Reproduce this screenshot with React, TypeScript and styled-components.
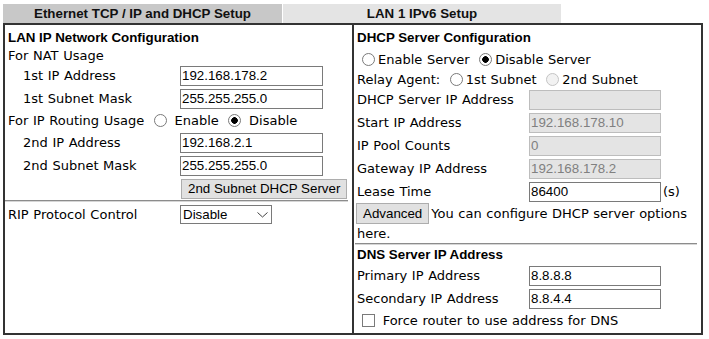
import React from 'react';
import styled, { createGlobalStyle } from 'styled-components';

const Global = createGlobalStyle`
  html, body { margin: 0; padding: 0; background: #fff; }
  body {
    font-family: "DejaVu Sans", Verdana, sans-serif;
    font-size: 13px;
    word-spacing: 0.5px;
    color: #000;
  }
  * { box-sizing: border-box; }
`;

const Page = styled.div`
  padding: 4px 0 0 3px;
  width: 703px;
`;

const TabBar = styled.div`
  display: flex;
  gap: 1px;
  height: 19px;
`;

const Tab = styled.div<{ $active?: boolean }>`
  width: ${(p) => (p.$active ? 279 : 278)}px;
  background: ${(p) => (p.$active ? '#c8c8c8' : '#e4e4e4')};
  font: bold 13.33px "Liberation Sans", Arial, sans-serif;
  word-spacing: 0;
  color: #111;
  display: flex;
  align-items: center;
  justify-content: center;
`;

const Panel = styled.div`
  width: 700px;
  height: 312px;
  border: 2px solid #333;
  display: grid;
  grid-template-columns: 347px 349px;
`;

const Column = styled.div<{ $divider?: boolean }>`
  display: flex;
  flex-direction: column;
  padding-top: 2px;
  border-left: ${(p) => (p.$divider ? '2px solid #333' : 'none')};
`;

const Row = styled.div<{ $h: number }>`
  display: flex;
  align-items: center;
  height: ${(p) => p.$h}px;
  padding-left: 3px;
  white-space: nowrap;
`;

const Heading = styled.div<{ $h: number }>`
  display: flex;
  align-items: center;
  height: ${(p) => p.$h}px;
  padding-left: 3px;
  font: bold 13.33px "Liberation Sans", Arial, sans-serif;
  word-spacing: 0;
`;

const Label = styled.span<{ $indent?: boolean }>`
  flex: none;
  width: 172px;
  padding-left: ${(p) => (p.$indent ? 15 : 0)}px;
`;

const TextInput = styled.input<{ $w: number }>`
  width: ${(p) => p.$w}px;
  height: 20px;
  margin: 0;
  padding: 0 2px 0 1px;
  border: 1px solid #7a7a7a;
  background: #fff;
  color: #000;
  font: 13.33px "Liberation Sans", Arial, sans-serif;
  word-spacing: 0;
  outline: none;
  &:disabled {
    background: #e4e4e4;
    border-color: #bdbdbd;
    color: #808080;
  }
`;

const Button = styled.button<{ $h: number }>`
  flex: none;
  height: ${(p) => p.$h}px;
  margin: 0;
  padding: 0 6px;
  border: 1px solid #adadad;
  border-radius: 0;
  background: #e1e1e1;
  color: #000;
  font: 13.33px "Liberation Sans", Arial, sans-serif;
  word-spacing: 0;
`;

const SubnetButton = styled(Button)`
  margin-left: 1px;
`;

const AdvancedButton = styled(Button)`
  margin: 0 2px 0 -1px;
`;

const Radio = styled.span<{ $checked?: boolean; $disabled?: boolean }>`
  display: inline-block;
  width: 13px;
  height: 13px;
  margin: 0 3px 0 5px;
  vertical-align: -2px;
  border-radius: 50%;
  border: 1px solid ${(p) => (p.$disabled ? '#c4c4c4' : '#7a7a7a')};
  background: ${(p) =>
    p.$checked
      ? 'radial-gradient(circle, #000 0 3px, #fff 3.6px)'
      : p.$disabled
      ? '#f2f2f2'
      : '#fff'};
`;

const Checkbox = styled.span`
  display: inline-block;
  width: 13px;
  height: 13px;
  margin: 0 3px 0 5px;
  vertical-align: -2px;
  border: 1px solid #7a7a7a;
  background: #fff;
`;

const Divider = styled.div<{ $left?: number }>`
  flex: none;
  height: 2px;
  margin: 0 4px 0 ${(p) => p.$left ?? 0}px;
  border-top: 1px solid #8c8c8c;
  border-bottom: 1px solid #d6d6d6;
`;

const SelectWrap = styled.span`
  position: relative;
  display: inline-block;
  width: 92px;
  height: 19px;
`;

const Select = styled.select`
  appearance: none;
  width: 100%;
  height: 100%;
  margin: 0;
  padding: 0 0 0 2px;
  border: 1px solid #7a7a7a;
  border-radius: 0;
  background: #fff;
  color: #000;
  font: 13.33px "Liberation Sans", Arial, sans-serif;
`;

const Chevron = styled.svg`
  position: absolute;
  right: 4px;
  top: 7px;
  pointer-events: none;
`;

const Unit = styled.span`
  margin-left: 2px;
`;

export default function App() {
  return (
    <>
      <Global />
      <Page>
        <TabBar>
          <Tab $active>Ethernet TCP / IP and DHCP Setup</Tab>
          <Tab>LAN 1 IPv6 Setup</Tab>
        </TabBar>
        <Panel>
          <Column>
            <Heading $h={20}>LAN IP Network Configuration</Heading>
            <Row $h={17}>For NAT Usage</Row>
            <Row $h={23}>
              <Label $indent>1st IP Address</Label>
              <TextInput $w={143} defaultValue="192.168.178.2" />
            </Row>
            <Row $h={23}>
              <Label $indent>1st Subnet Mask</Label>
              <TextInput $w={143} defaultValue="255.255.255.0" />
            </Row>
            <Row $h={21}>
              <span>
                For IP Routing Usage <Radio /> Enable <Radio $checked /> Disable
              </span>
            </Row>
            <Row $h={23}>
              <Label $indent>2nd IP Address</Label>
              <TextInput $w={143} defaultValue="192.168.2.1" />
            </Row>
            <Row $h={23}>
              <Label $indent>2nd Subnet Mask</Label>
              <TextInput $w={143} defaultValue="255.255.255.0" />
            </Row>
            <Row $h={23}>
              <Label />
              <SubnetButton $h={20}>2nd Subnet DHCP Server</SubnetButton>
            </Row>
            <Divider />
            <Row $h={24}>
              <Label>RIP Protocol Control</Label>
              <SelectWrap>
                <Select defaultValue="Disable">
                  <option>Disable</option>
                  <option>Enable</option>
                </Select>
                <Chevron width="11" height="6" viewBox="0 0 11 6">
                  <polyline points="0.5,0.5 5.5,5 10.5,0.5" fill="none" stroke="#444" strokeWidth="1" />
                </Chevron>
              </SelectWrap>
            </Row>
          </Column>

          <Column $divider>
            <Heading $h={21}>DHCP Server Configuration</Heading>
            <Row $h={23}>
              <span>
                <Radio />Enable Server <Radio $checked />Disable Server
              </span>
            </Row>
            <Row $h={17}>
              <span>
                Relay Agent: <Radio />1st Subnet <Radio $disabled />2nd Subnet
              </span>
            </Row>
            <Row $h={23}>
              <Label>DHCP Server IP Address</Label>
              <TextInput $w={132} disabled defaultValue="" />
            </Row>
            <Row $h={23}>
              <Label>Start IP Address</Label>
              <TextInput $w={132} disabled defaultValue="192.168.178.10" />
            </Row>
            <Row $h={23}>
              <Label>IP Pool Counts</Label>
              <TextInput $w={132} disabled defaultValue="0" />
            </Row>
            <Row $h={23}>
              <Label>Gateway IP Address</Label>
              <TextInput $w={132} disabled defaultValue="192.168.178.2" />
            </Row>
            <Row $h={23}>
              <Label>Lease Time</Label>
              <TextInput $w={132} defaultValue="86400" />
              <Unit>(s)</Unit>
            </Row>
            <Row $h={21}>
              <AdvancedButton $h={21}>Advanced</AdvancedButton>
              <span>You can configure DHCP server options</span>
            </Row>
            <Row $h={19}>here.</Row>
            <Divider $left={1} />
            <Heading $h={19}>DNS Server IP Address</Heading>
            <Row $h={23}>
              <Label>Primary IP Address</Label>
              <TextInput $w={132} defaultValue="8.8.8.8" />
            </Row>
            <Row $h={23}>
              <Label>Secondary IP Address</Label>
              <TextInput $w={132} defaultValue="8.8.4.4" />
            </Row>
            <Row $h={20}>
              <span>
                <Checkbox /> Force router to use address for DNS
              </span>
            </Row>
          </Column>
        </Panel>
      </Page>
    </>
  );
}
